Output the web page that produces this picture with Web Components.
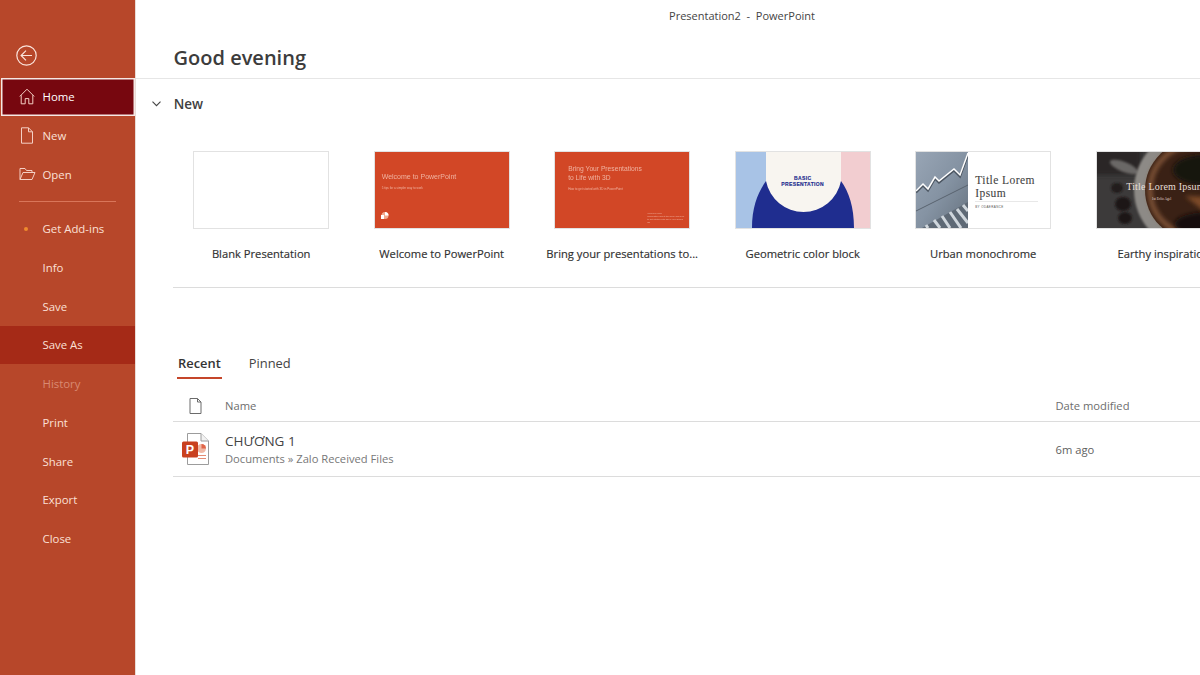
<!DOCTYPE html>
<html><head><meta charset="utf-8"><title>PowerPoint</title>
<style>
html,body{margin:0;height:675px;overflow:hidden;background:#fff}
body{font-family:"Open Sans","Noto Sans",sans-serif}
ppt-app{height:675px}
</style></head><body>
<ppt-app>
  <ppt-sidebar>
    <ppt-nav label="Home" state="active"><svg slot="icon" width="16" height="17" viewBox="0 0 16 17" fill="none" stroke="#f4cfc4" stroke-width="1"><path d="M.8 8.400 8 1.200l7.200 7.200M2.200 7.200v8.600h4V10.600h3.600v5.200h4V7.200"/></svg></ppt-nav>
    <ppt-nav label="New"><svg slot="icon" width="16" height="17" viewBox="0 0 16 17" fill="none" stroke="#f4cfc4" stroke-width="1"><path d="M2.500 .8h7l4 4v11.400h-11zM9.500 .8v4h4"/></svg></ppt-nav>
    <ppt-nav label="Open"><svg slot="icon" width="17" height="14" viewBox="0 0 17 14" fill="none" stroke="#f4cfc4" stroke-width="1"><path d="M1 12.500V1.500h5l1.500 2h5.500v2M1 12.500 4 5.500h12l-3 7z"/></svg></ppt-nav>
    <ppt-rule></ppt-rule>
    <ppt-nav label="Get Add-ins" dot></ppt-nav>
    <ppt-nav label="Info"></ppt-nav>
    <ppt-nav label="Save"></ppt-nav>
    <ppt-nav label="Save As" state="hover"></ppt-nav>
    <ppt-nav label="History" state="disabled"></ppt-nav>
    <ppt-nav label="Print"></ppt-nav>
    <ppt-nav label="Share"></ppt-nav>
    <ppt-nav label="Export"></ppt-nav>
    <ppt-nav label="Close"></ppt-nav>
  </ppt-sidebar>
  <ppt-main>
    <ppt-titlebar>Presentation2&nbsp; -&nbsp; PowerPoint</ppt-titlebar>
    <ppt-greeting>Good evening</ppt-greeting>
    <ppt-new>
      <ppt-tile label="Blank Presentation"><div style="width:100%;height:100%;background:#fff"></div></ppt-tile>
      <ppt-tile label="Welcome to PowerPoint"><ppt-thumb-welcome></ppt-thumb-welcome></ppt-tile>
      <ppt-tile label="Bring your presentations to..."><ppt-thumb-bring></ppt-thumb-bring></ppt-tile>
      <ppt-tile label="Geometric color block"><ppt-thumb-geo></ppt-thumb-geo></ppt-tile>
      <ppt-tile label="Urban monochrome"><ppt-thumb-urban></ppt-thumb-urban></ppt-tile>
      <ppt-tile label="Earthy inspiration"><ppt-thumb-earthy></ppt-thumb-earthy></ppt-tile>
    </ppt-new>
    <ppt-recent></ppt-recent>
  </ppt-main>
</ppt-app>
<script>
function def(name, css, html){
  customElements.define(name, class extends HTMLElement{
    connectedCallback(){
      if(this.shadowRoot) return;
      const r=this.attachShadow({mode:'open'});
      r.innerHTML='<style>'+css+'</style>'+html;
    }
  });
}
const FONT='"Open Sans","Noto Sans",sans-serif';
def('ppt-app',`:host{display:flex;width:1200px;height:675px;overflow:hidden;background:#fff;font-family:${FONT}}`,'<slot></slot>');
def('ppt-sidebar',`:host{display:flex;flex-direction:column;flex:0 0 136px;width:136px;height:675px;box-sizing:border-box;padding-top:36px;background:#b7472a;border-right:1px solid #e9dcd7}
.back{height:41.600px;display:flex;align-items:center;padding-left:16px;flex:none;box-sizing:border-box;padding-bottom:2.600px}`,
`<div class="back"><svg width="21" height="21" viewBox="0 0 21 21" fill="none" stroke="#fbe4dc" stroke-width="1.200"><circle cx="10.500" cy="10.500" r="9.700"/><path d="M16 10.500H5.200M10 5.600 5.100 10.500 10 15.400"/></svg></div><slot></slot>`);
customElements.define('ppt-nav', class extends HTMLElement{
  connectedCallback(){
    if(this.shadowRoot) return;
    const label=this.getAttribute('label'), dot=this.hasAttribute('dot');
    const r=this.attachShadow({mode:'open'});
    r.innerHTML=`<style>
    :host{display:flex;align-items:center;height:38.750px;box-sizing:border-box;padding-left:19px;font-size:11.400px;color:#fbe0d6;flex:none}
    :host([state=active]){background:#77070f;color:#fff;box-shadow:inset 0 0 0 1.500px #f6e8e4;margin:0 0 0 1px;padding-left:18px}
    :host([state=hover]){background:#a52a17}
    :host([state=disabled]){color:#d98a72}
    .ic{width:23.500px;display:flex;align-items:center;flex:none}
    .dot{width:4px;height:4px;border-radius:50%;background:#ef8a2e;margin-left:5px}
    </style><span class="ic"><slot name="icon">${dot?'<span class="dot"></span>':''}</slot></span><span>${label}</span>`;
  }
});
def('ppt-rule',`:host{display:block;height:1px;background:#d9765a;margin:7.500px 19px 7px 19px;flex:none}`,'');
def('ppt-main',`:host{display:block;flex:1;min-width:0;overflow:hidden}`,'<slot></slot>');
def('ppt-titlebar',`:host{display:block;height:31px;padding-top:8px;box-sizing:border-box;text-align:center;padding-left:148px;font-size:11px;color:#444;line-height:16px}`,'<slot></slot>');
def('ppt-greeting',`:host{display:block;height:48px;box-sizing:border-box;padding:13px 0 0 37.600px;font-size:20px;font-weight:600;color:#3c3c3c;line-height:28px;border-bottom:1px solid #e6e6e6}`,'<slot></slot>');
def('ppt-new',`:host{display:block;height:209px;margin-left:37.200px;border-bottom:1px solid #dcdcdc;box-sizing:border-box;width:1100px}
.head{display:flex;align-items:center;height:50px;margin-left:-21px;font-size:13.500px;font-weight:600;color:#404040;gap:12.500px}
.row{display:flex;gap:44.500px;padding-left:20px;padding-top:22px;white-space:nowrap}`,
`<div class="head"><svg width="9" height="6" viewBox="0 0 9 6" fill="none" stroke="#444" stroke-width="1.100"><path d="M.5.700 4.500 4.700 8.500.700"/></svg><span>New</span></div><div class="row"><slot></slot></div>`);
customElements.define('ppt-tile', class extends HTMLElement{
  connectedCallback(){
    if(this.shadowRoot) return;
    const r=this.attachShadow({mode:'open'});
    r.innerHTML=`<style>:host{display:block;flex:none;width:136px}
    .t{width:136px;height:78px;box-sizing:border-box;border:1px solid #e2e2e2;overflow:hidden;background:#fff}
    .l{margin:16px -22px 0;text-align:center;font-size:11.200px;color:#303030;line-height:18px;white-space:nowrap;-webkit-text-stroke:.15px #303030}</style>
    <div class="t"><slot></slot></div><div class="l">${this.getAttribute('label')}</div>`;
  }
});
const th=`:host{display:block;width:100%;height:100%;position:relative;overflow:hidden}`;
def('ppt-thumb-welcome',th+`:host{background:#d24726;color:#f5c4b4;font-family:"Liberation Sans",sans-serif}
.a{position:absolute;left:7px;top:20.500px;font-size:7px;opacity:.85}
.b{position:absolute;left:7px;top:33.500px;font-size:3px;opacity:.85}
svg{position:absolute;left:5px;top:59px}`,
`<div class="a">Welcome to PowerPoint</div><div class="b">5 tips for a simpler way to work</div><svg width="9" height="9" viewBox="0 0 9 9"><circle cx="5" cy="4.500" r="3.500" fill="#f3a98e"/><path d="M5 4.500V1a3.500 3.500 0 0 1 3.500 3.500z" fill="#fff"/><rect x="1" y="4" width="3" height="4" fill="#fff"/></svg>`);
def('ppt-thumb-bring',th+`:host{background:#d24726;color:#f5c4b4;font-family:"Liberation Sans",sans-serif}
.a{position:absolute;left:13px;top:12px;font-size:6.700px;line-height:9px;opacity:.85}
.b{position:absolute;left:13px;top:35px;font-size:3px;opacity:.85}
.c{position:absolute;left:92px;top:60px;font-size:2.300px;line-height:3px;opacity:.8;white-space:nowrap}`,
`<div class="a">Bring Your Presentations<br>to Life with 3D</div><div class="b">How to get started with 3D in PowerPoint</div><div class="c">Welcome slide<br>Information about this deck and how<br>to get started with 3D in your slides<br>3D</div>`);
def('ppt-thumb-geo',th+`svg{display:block;width:100%;height:100%}
.t{position:absolute;left:0;right:0;top:23px;text-align:center;font-family:"Liberation Sans",sans-serif;font-weight:700;font-size:5px;line-height:6px;color:#1f2d8f;letter-spacing:.35px;-webkit-text-stroke:.15px #1f2d8f}`,
`<svg viewBox="0 0 134 76" preserveAspectRatio="none"><rect width="134" height="76" fill="#f2cdd0"/><rect width="30" height="76" fill="#a8c3e6"/><rect x="30" width="75" height="76" fill="#f8f5f0"/><path d="M16 76C16 55 22 40 30 29A38.200 38.200 0 0 0 105 29C113 40 118 55 118 76z" fill="#1f2d8f"/></svg><div class="t">BASIC<br>PRESENTATION</div>`);
def('ppt-thumb-urban',th+`:host{background:#fff}
svg{position:absolute;left:0;top:0}
.a{position:absolute;left:59px;top:22px;font-family:"Liberation Serif",serif;font-size:11.500px;line-height:12.500px;color:#444;letter-spacing:.45px;-webkit-text-stroke:.1px #444}
.r{position:absolute;left:59px;top:49px;width:63px;height:1px;background:#e8e8e8}
.b{position:absolute;left:59px;top:53px;font:3px "Liberation Sans",sans-serif;letter-spacing:.4px;color:#555}`,
`<svg width="52" height="76" viewBox="0 0 52 76"><defs><linearGradient id="g" x1="0" y1="0" x2="1" y2="1"><stop offset="0" stop-color="#98a5b5"/><stop offset=".5" stop-color="#8593a3"/><stop offset="1" stop-color="#66727f"/></linearGradient></defs><rect width="52" height="76" fill="url(#g)"/><path d="M0 59 52 33" stroke="#59636f" stroke-width="1"/><path d="M6 76 52 50V76z" fill="#5e6975"/><g stroke="#cfd6dc" stroke-width="3"><path d="M10 73 12 76M18 68 24 76M26 64 34 76M34 60 45 76M41 57 52 71M47 53 52 59"/></g><path d="M0 40.500 7 33.500 12 38.500 19 26.500 23 30.500 38 18.500 44 24.500 52 2.500" fill="none" stroke="#4c5662" stroke-width="2.200"/><path d="M0 39 7 32 12 37 19 25 23 29 38 17 44 23 52 1" fill="none" stroke="#fff" stroke-width="1.500"/></svg><div class="a">Title Lorem<br>Ipsum</div><div class="r"></div><div class="b">BY ODAERANCE</div>`);
def('ppt-thumb-earthy',th+`:host{background:#3a3838}
svg{position:absolute;left:0;top:0}
.a{position:absolute;left:29.500px;top:29px;white-space:nowrap;font-family:"Liberation Serif",serif;font-size:10px;color:#e5dfd8;letter-spacing:.2px}
.b{position:absolute;left:55px;top:45px;white-space:nowrap;font:3.500px "Liberation Serif",serif;color:#e5dfd8}`,
`<svg width="134" height="76" viewBox="0 0 134 76"><defs><filter id="bl" x="-30%" y="-30%" width="160%" height="160%"><feGaussianBlur stdDeviation="2.200"/></filter><filter id="bs" x="-30%" y="-30%" width="160%" height="160%"><feGaussianBlur stdDeviation="1"/></filter></defs><rect width="134" height="76" fill="#3c3a3a"/><rect x="-8" y="-3" width="52" height="26" fill="#2a2625" filter="url(#bl)"/><ellipse cx="27" cy="15" rx="15" ry="5" fill="#6a6866" transform="rotate(22 27 15)" filter="url(#bs)"/><ellipse cx="26" cy="52" rx="8" ry="7" fill="#1c1615" filter="url(#bs)"/><ellipse cx="28" cy="66" rx="7" ry="6" fill="#1f1918" filter="url(#bs)"/><ellipse cx="20" cy="36" rx="6" ry="5" fill="#211b1a" filter="url(#bs)"/><circle cx="97" cy="38" r="60" fill="#8d8a86" filter="url(#bs)"/><circle cx="98" cy="38" r="50" fill="#3a2115"/><circle cx="98" cy="38" r="45" fill="none" stroke="#7d5136" stroke-width="5" filter="url(#bl)"/><ellipse cx="106" cy="18" rx="30" ry="15" fill="#141211" filter="url(#bl)"/><ellipse cx="112" cy="72" rx="34" ry="12" fill="#14100d" filter="url(#bl)"/><path d="M88 44 134 46V64L108 60z" fill="#7c4a28" filter="url(#bl)"/></svg><div class="a">Title Lorem Ipsum</div><div class="b">1st Ecliz Agel</div>`);
def('ppt-recent',`:host{display:block;margin-left:37px;width:1100px;color:#333}
.tabs{display:flex;gap:27px;height:48px;margin-top:60px;padding-left:5px;box-sizing:border-box;font-size:12.900px;color:#444}
.tab{height:30px;box-sizing:border-box;line-height:30px}
.on{font-weight:600;color:#333;border-bottom:2.500px solid #c5462a;padding:0 1px;margin-left:-1px;height:31px}
.hd,.file{display:grid;grid-template-columns:52px 830.500px 1fr;align-items:center;border-bottom:1px solid #dcdcdc}
.hd{height:32px;box-sizing:border-box;font-size:11.200px;color:#6d6d6d;margin-top:-6px}
.file{height:55px;box-sizing:border-box}
.ic{padding-left:16px;display:flex}
.tx{margin-top:1px}
.name{font-size:13.500px;line-height:18px;color:#444}
.path{font-size:11.200px;line-height:18px;color:#777}
.when{font-size:11.200px;color:#5f5f5f}`,
`<div class="tabs"><div class="tab on">Recent</div><div class="tab">Pinned</div></div>
<div class="hd"><div class="ic"><svg width="13" height="16" viewBox="0 0 13 16" fill="none" stroke="#6b6b6b" stroke-width="1"><path d="M1 .5h7.500l3.500 3.500v11.500h-11zM8.500.5v3.500h3.500"/></svg></div><div>Name</div><div>Date modified</div></div>
<div class="file"><div class="ic" style="padding-left:8.500px"><svg width="28" height="32" viewBox="0 0 28 32"><path d="M5.500 .5H19l7.500 7.500v23.500h-21z" fill="#fff" stroke="#9c9c9c"/><path d="M19 .5V8h7.500" fill="#f2f2f2" stroke="#9c9c9c"/><circle cx="19.500" cy="15.500" r="4.500" fill="#f0b8a5"/><path d="M19.500 15.500V11a4.500 4.500 0 0 1 4.500 4.500z" fill="#e0664a"/><path d="M16 22h8v1h-8zM16 25h8v1h-8z" fill="#e58b73"/><rect x="0" y="8.500" width="16" height="16" rx="1.500" fill="#c9401f"/><text x="8" y="21" text-anchor="middle" font-family="Liberation Sans" font-weight="700" font-size="12.500" fill="#fff">P</text></svg></div><div class="tx"><div class="name">CHƯƠNG 1</div><div class="path">Documents » Zalo Received Files</div></div><div class="when">6m ago</div></div>`);
</script>
</body></html>
